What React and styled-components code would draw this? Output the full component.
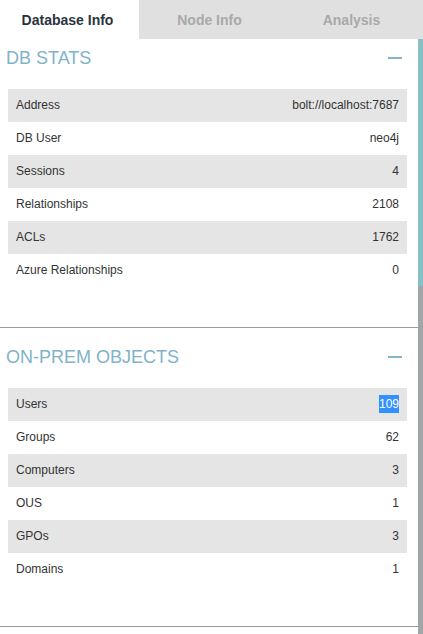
import React from 'react';
import styled, { createGlobalStyle } from 'styled-components';

const GlobalStyle = createGlobalStyle`
  html, body {
    margin: 0;
    padding: 0;
    height: 100%;
    background: #ffffff;
    font-family: "Liberation Sans", Arial, sans-serif;
  }
  #root {
    height: 100%;
  }
`;

const Panel = styled.div`
  height: 100vh;
  width: 100%;
  display: flex;
  flex-direction: column;
  background: #fff;
`;

const TabBar = styled.div`
  display: flex;
  height: 39px;
  flex-shrink: 0;
`;

const Tab = styled.div`
  width: ${(p) => p.width}px;
  display: flex;
  align-items: center;
  justify-content: center;
  font-size: 14px;
  font-weight: bold;
  padding-right: ${(p) => (p.active ? 4 : 0)}px;
  box-sizing: border-box;
  background: ${(p) => (p.active ? '#ffffff' : '#e0e0e0')};
  color: ${(p) => (p.active ? '#2b333e' : '#a9a9a9')};
  cursor: pointer;
`;

const Body = styled.div`
  flex: 1;
  display: flex;
  min-height: 0;
`;

const Viewport = styled.div`
  flex: 1;
  overflow: hidden;
`;

const ScrollTrack = styled.div`
  width: 5px;
  flex-shrink: 0;
  background: #a2a5a9;
`;

const ScrollThumb = styled.div`
  height: 247px;
  background: #88c0c5;
`;

const Section = styled.div`
  padding-top: ${(p) => (p.first ? 0 : 10)}px;
  padding-bottom: 40px;
  border-bottom: 1px solid #9a9a9a;
`;

const Header = styled.div`
  height: 50px;
  box-sizing: border-box;
  padding: 9px 16px 0 6px;
  display: flex;
  justify-content: space-between;
  align-items: flex-start;
`;

const Title = styled.h3`
  margin: 0;
  font-size: 18px;
  font-weight: normal;
  color: #7fb3c9;
  line-height: 21px;
`;

const Collapse = styled.span`
  width: 14px;
  height: 2px;
  margin-top: 9px;
  background: #86b5c8;
`;

const Table = styled.div`
  margin: 0 11px 0 8px;
`;

const Row = styled.div`
  height: 33px;
  box-sizing: border-box;
  padding: 0 8px 2px;
  display: flex;
  align-items: center;
  justify-content: space-between;
  font-size: 12px;
  color: #333;
  background: ${(p) => (p.shaded ? '#e5e5e5' : '#ffffff')};
`;

const Highlight = styled.span`
  background: #3390ff;
  color: #fff;
  padding: 2px 0;
`;

const sections = [
  {
    title: 'DB STATS',
    rows: [
      ['Address', 'bolt://localhost:7687'],
      ['DB User', 'neo4j'],
      ['Sessions', '4'],
      ['Relationships', '2108'],
      ['ACLs', '1762'],
      ['Azure Relationships', '0'],
    ],
  },
  {
    title: 'ON-PREM OBJECTS',
    rows: [
      ['Users', '109', true],
      ['Groups', '62'],
      ['Computers', '3'],
      ['OUS', '1'],
      ['GPOs', '3'],
      ['Domains', '1'],
    ],
  },
];

const App = () => {
  return (
    <>
      <GlobalStyle />
      <Panel>
        <TabBar>
          <Tab active width={139}>Database Info</Tab>
          <Tab width={141}>Node Info</Tab>
          <Tab width={143}>Analysis</Tab>
        </TabBar>
        <Body>
          <Viewport>
            {sections.map((s, i) => (
              <Section key={s.title} first={i === 0}>
                <Header>
                  <Title>{s.title}</Title>
                  <Collapse />
                </Header>
                <Table>
                  {s.rows.map(([label, value, selected], j) => (
                    <Row key={label} shaded={j % 2 === 0}>
                      <span>{label}</span>
                      <span>{selected ? <Highlight>{value}</Highlight> : value}</span>
                    </Row>
                  ))}
                </Table>
              </Section>
            ))}
          </Viewport>
          <ScrollTrack>
            <ScrollThumb />
          </ScrollTrack>
        </Body>
      </Panel>
    </>
  );
};

export default App;
